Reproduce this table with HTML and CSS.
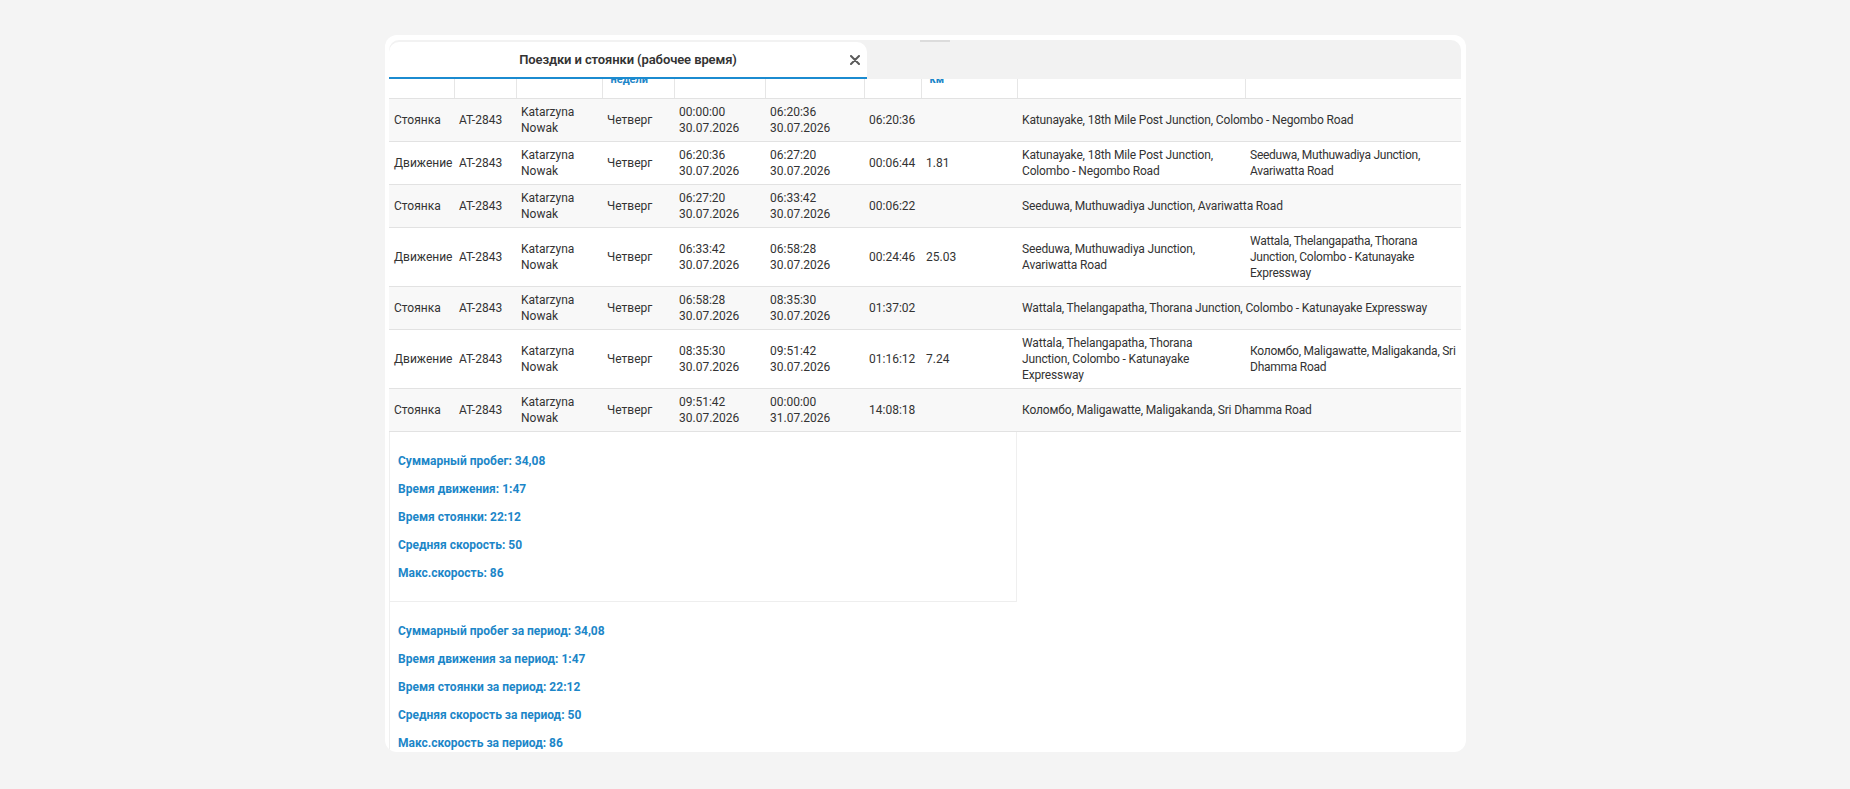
FILE: index.html
```html
<!DOCTYPE html>
<html lang="ru">
<head>
<meta charset="utf-8">
<title>Поездки и стоянки</title>
<link rel="stylesheet" href="styles.css">
</head>
<body>
<div class="page">
  <div class="card">
    <div class="tabbar">
      <div class="tab">
        <span class="tab-title">Поездки и стоянки (рабочее время)</span>
        <button class="close" aria-label="Закрыть">
          <svg viewBox="0 0 10 10" width="10" height="10"><path d="M1 1 L9 9 M9 1 L1 9" stroke="#5a5a5a" stroke-width="2" stroke-linecap="round" fill="none"/></svg>
        </button>
      </div>
      <span class="marker"></span>
    </div>
    <div class="content">
      <table class="trips">
        <colgroup>
          <col class="c-type"><col class="c-num"><col class="c-driver"><col class="c-day"><col class="c-start"><col class="c-end"><col class="c-dur"><col class="c-km"><col class="c-a1"><col class="c-a2">
        </colgroup>
        <thead>
          <tr>
            <th>Тип</th><th>Номер</th><th>Водитель</th><th>День<br>недели</th><th>Начало</th><th>Конец</th><th>Время</th><th>Пробег,<br>км</th><th>Начальный адрес</th><th>Конечный адрес</th>
          </tr>
        </thead>
        <tbody>
          <tr class="stop">
            <td>Стоянка</td><td>AT-2843</td><td>Katarzyna Nowak</td><td>Четверг</td><td>00:00:00 30.07.2026</td><td>06:20:36 30.07.2026</td><td>06:20:36</td><td></td><td class="addr" colspan="2">Katunayake, 18th Mile Post Junction, Colombo - Negombo Road</td>
          </tr>
          <tr class="move">
            <td>Движение</td><td>AT-2843</td><td>Katarzyna Nowak</td><td>Четверг</td><td>06:20:36 30.07.2026</td><td>06:27:20 30.07.2026</td><td>00:06:44</td><td>1.81</td><td class="addr">Katunayake, 18th Mile Post Junction, Colombo - Negombo Road</td><td class="addr addr-end">Seeduwa, Muthuwadiya Junction, Avariwatta Road</td>
          </tr>
          <tr class="stop">
            <td>Стоянка</td><td>AT-2843</td><td>Katarzyna Nowak</td><td>Четверг</td><td>06:27:20 30.07.2026</td><td>06:33:42 30.07.2026</td><td>00:06:22</td><td></td><td class="addr" colspan="2">Seeduwa, Muthuwadiya Junction, Avariwatta Road</td>
          </tr>
          <tr class="move">
            <td>Движение</td><td>AT-2843</td><td>Katarzyna Nowak</td><td>Четверг</td><td>06:33:42 30.07.2026</td><td>06:58:28 30.07.2026</td><td>00:24:46</td><td>25.03</td><td class="addr">Seeduwa, Muthuwadiya Junction, Avariwatta Road</td><td class="addr addr-end">Wattala, Thelangapatha, Thorana Junction, Colombo - Katunayake Expressway</td>
          </tr>
          <tr class="stop">
            <td>Стоянка</td><td>AT-2843</td><td>Katarzyna Nowak</td><td>Четверг</td><td>06:58:28 30.07.2026</td><td>08:35:30 30.07.2026</td><td>01:37:02</td><td></td><td class="addr" colspan="2">Wattala, Thelangapatha, Thorana Junction, Colombo - Katunayake Expressway</td>
          </tr>
          <tr class="move">
            <td>Движение</td><td>AT-2843</td><td>Katarzyna Nowak</td><td>Четверг</td><td>08:35:30 30.07.2026</td><td>09:51:42 30.07.2026</td><td>01:16:12</td><td>7.24</td><td class="addr">Wattala, Thelangapatha, Thorana Junction, Colombo - Katunayake Expressway</td><td class="addr addr-end">Коломбо, Maligawatte, Maligakanda, Sri Dhamma Road</td>
          </tr>
          <tr class="stop">
            <td>Стоянка</td><td>AT-2843</td><td>Katarzyna Nowak</td><td>Четверг</td><td>09:51:42 30.07.2026</td><td>00:00:00 31.07.2026</td><td>14:08:18</td><td></td><td class="addr" colspan="2">Коломбо, Maligawatte, Maligakanda, Sri Dhamma Road</td>
          </tr>
        </tbody>
      </table>
      <div class="summary summary-day">
        <p>Суммарный пробег: 34,08</p>
        <p>Время движения: 1:47</p>
        <p>Время стоянки: 22:12</p>
        <p>Средняя скорость: 50</p>
        <p>Макс.скорость: 86</p>
      </div>
      <div class="summary summary-period">
        <p>Суммарный пробег за период: 34,08</p>
        <p>Время движения за период: 1:47</p>
        <p>Время стоянки за период: 22:12</p>
        <p>Средняя скорость за период: 50</p>
        <p>Макс.скорость за период: 86</p>
      </div>
    </div>
  </div>
</div>
</body>
</html>
```

FILE: styles.css
```css
html, body {
  margin: 0;
  background: #f4f4f4;
  font-family: Roboto, "Noto Sans", "Liberation Sans", sans-serif;
}

.page {
  padding: 35px 0 0 385px;
}

.card {
  width: 1081px;
  height: 717px;
  box-sizing: border-box;
  background: #fff;
  border-radius: 12px;
  padding: 5px 5px 0 4px;
  display: flex;
  flex-direction: column;
  overflow: hidden;
}

.tabbar {
  flex: none;
  height: 39px;
  background: #f2f2f2;
  border-radius: 10px 10px 0 0;
  display: flex;
  align-items: flex-end;
}

.tab {
  width: 478px;
  height: 37px;
  box-sizing: border-box;
  background: #fff;
  border-radius: 10px 10px 0 0;
  border-bottom: 2px solid #1b8bd0;
  display: grid;
  grid-template-columns: 1fr auto 1fr;
  align-items: center;
}

.tab-title {
  grid-column: 2;
  font-size: 13px;
  font-weight: 600;
  letter-spacing: -0.1px;
  color: #333;
}

.close {
  grid-column: 3;
  justify-self: end;
  margin-right: 7px;
  width: 10px;
  height: 10px;
  padding: 0;
  border: 0;
  background: none;
  display: flex;
}

.marker {
  align-self: flex-start;
  width: 30px;
  height: 2px;
  margin-left: 53px;
  background: #dcdcdc;
}

.content {
  flex: 1;
  overflow: hidden;
}

.trips {
  width: 1072px;
  border-collapse: collapse;
  table-layout: fixed;
  margin-top: -28px;
  font-size: 12px;
  line-height: 16px;
  color: #333;
}

.c-type { width: 65px; }
.c-num { width: 62px; }
.c-driver { width: 86px; }
.c-day { width: 72px; }
.c-start { width: 91px; }
.c-end { width: 99px; }
.c-dur { width: 57px; }
.c-km { width: 96px; }
.c-a1 { width: 228px; }
.c-a2 { width: 216px; }

.trips th {
  padding: 5px 8px 10px;
  vertical-align: top;
  text-align: left;
  font-size: 11px;
  font-weight: 700;
  color: #1c86c8;
  background: #fff;
  border-right: 1px solid #e6e6e6;
  border-bottom: 1px solid #e2e2e2;
  white-space: nowrap;
  overflow: hidden;
}

.trips th:last-child {
  border-right: 0;
}

.trips td {
  padding: 5px;
  vertical-align: middle;
  border-bottom: 1px solid #e2e2e2;
}

.trips td.addr {
  letter-spacing: -0.15px;
}

.trips td.addr-end {
  padding-right: 0;
  letter-spacing: -0.25px;
}

.trips tr.stop td {
  background: #f8f8f8;
}

.summary {
  width: 628px;
  box-sizing: border-box;
  padding: 21px 8px 20px;
  display: flex;
  flex-direction: column;
  gap: 12px;
  border-left: 1px solid #efefef;
}

.summary-day {
  border-right: 1px solid #efefef;
  border-bottom: 1px solid #eeeeee;
}

.summary p {
  margin: 0;
  font-size: 12px;
  line-height: 16px;
  font-weight: 700;
  color: #1c86c8;
}
```
